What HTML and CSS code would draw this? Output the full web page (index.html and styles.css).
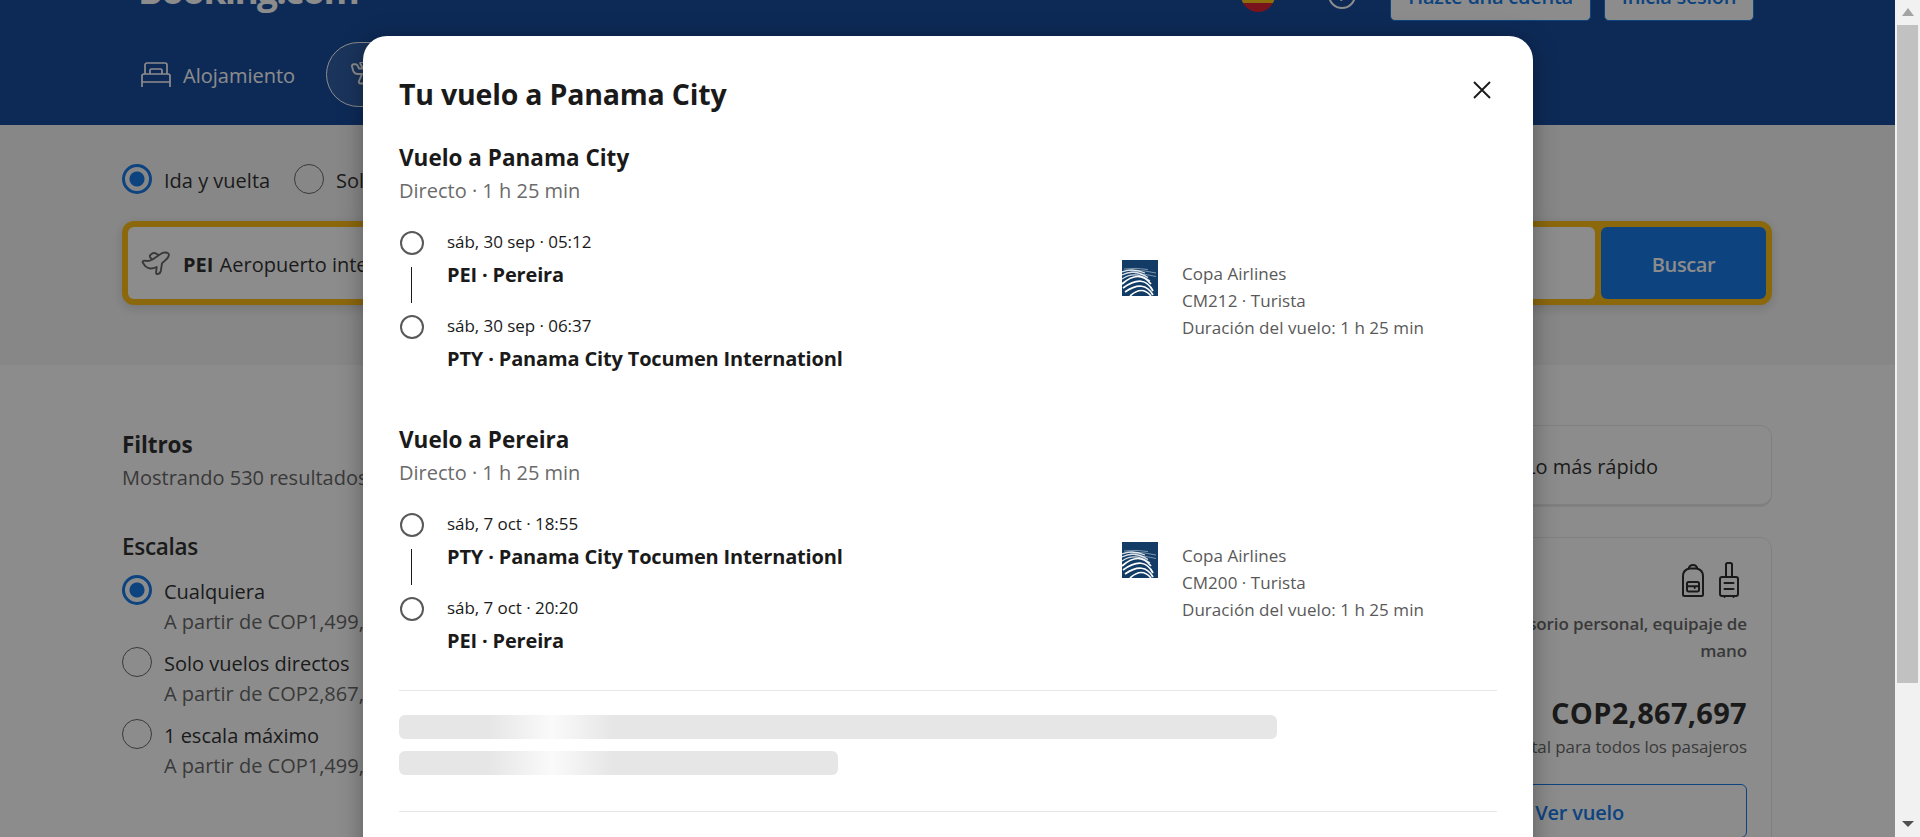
FILE: index.html
```html
<!DOCTYPE html>
<html lang="es">
<head>
<meta charset="utf-8">
<title>Tu vuelo a Panama City</title>
<link rel="stylesheet" href="styles.css">
</head>
<body>
<svg class="defs" aria-hidden="true">
  <symbol id="plane" viewBox="0 0 30 26">
    <path d="M1.800 12.600c-.4-1 .2-2 1.500-2l3.300.4c2 0 3.200-.6 5-1.500l8-5.500c2-1.500 4.300-1.700 6.600-1.200 1.800.5 2 2 1.300 3.600-.6 1.800-1.900 3-3.500 4.200l-3 2.700-1.200 7.700c-.3 1.600-1 2.400-2.500 2.900-1.500.4-2.400 0-2.200-1.500l.6-5.400c-2 1-4.300 1.600-6.600 1.500-2-.1-3.500-1-4.800-2.300zM11.500 9.500 9.600 7.900c-1.100-1-1.100-2.300 0-3.200l1.600-1.200c1-.7 1.900-.7 3-.3l3.400 1.800"/>
  </symbol>
  <symbol id="takeoff" viewBox="0 0 30 26">
    <path d="M1 4.500C.8 3 1.500 2.200 3 2.200h1.500c1 0 1.600.5 2 1.300L8 6.500h4L9.500 2c-.5-1 0-2 1.200-2H13l7 6.500h5c5 0 5 6 0 6h-5L14 20c-.7 1-1.400 1.500-2.500 1.500H9.500C8 21.500 7.600 20.500 8 19l3-7H7c-2.500 0-4-1-4.700-3z"/>
  </symbol>
  <symbol id="copa" viewBox="0 0 36 36">
    <path fill="#123c66" d="M0 0h36v36H0z"/>
    <g fill="none" stroke="#fff">
      <path stroke-width=".7" opacity=".65" d="M2 9q12-1.500 24 .5M8 11q14-1.500 26 2M13 14q10-.5 21 2.500"/>
      <path stroke-width="1.300" opacity=".85" d="M0 12q10-4.500 23 1M0 15q12-6.500 26 2.500M0 19q13-9 28 2"/>
      <path stroke-width="1.700" d="M0 24Q17 9 29 24M1 28Q22 13 31 31M3 32Q22 19 31 35M8 36q12-11 21 0"/>
    </g>
  </symbol>
</svg>

<div class="page">
  <header class="header">
    <div class="topbar">
      <span class="logo">Booking.com</span>
      <span class="flag"></span>
      <span class="help"><span>?</span></span>
      <span class="account create">Hazte una cuenta</span>
      <span class="account login">Inicia sesión</span>
    </div>
    <nav class="nav">
      <svg class="bed" viewBox="0 0 30 26"><path d="M1 25V14a2 2 0 0 1 2-2h24a2 2 0 0 1 2 2V25M1 20h28M4 12V3a2 2 0 0 1 2-2h18a2 2 0 0 1 2 2v9M9 12V8.500A1.500 1.500 0 0 1 10.500 7h9A1.500 1.500 0 0 1 21 8.500V12"/></svg>
      <span class="nav-text">Alojamiento</span>
      <span class="pill"><svg class="plane"><use href="#takeoff"/></svg></span>
    </nav>
  </header>

  <section class="search-band">
    <div class="trip-types">
      <span class="radio on"></span><span class="trip-label first">Ida y vuelta</span>
      <span class="radio"></span><span class="trip-label">Solo ida</span>
    </div>
    <div class="search">
      <div class="field"><svg class="plane"><use href="#plane"/></svg><span class="origin"><b>PEI</b> Aeropuerto internacional</span></div>
      <div class="submit">Buscar</div>
    </div>
  </section>

  <main class="results">
    <aside class="filters">
      <h2 class="heading">Filtros</h2>
      <p class="count">Mostrando 530 resultados</p>
      <h3 class="heading sub">Escalas</h3>
      <div class="option"><span class="radio on"></span><div><p class="name">Cualquiera</p><p class="from">A partir de COP1,499,211</p></div></div>
      <div class="option"><span class="radio"></span><div><p class="name">Solo vuelos directos</p><p class="from">A partir de COP2,867,697</p></div></div>
      <div class="option"><span class="radio"></span><div><p class="name">1 escala máximo</p><p class="from">A partir de COP1,499,211</p></div></div>
    </aside>
    <div class="offers">
      <div class="sort"><span class="sort-text">Lo más rápido</span></div>
      <div class="offer">
        <div class="bags">
          <svg class="backpack" viewBox="0 0 22 36"><path d="M1 32.500V14c0-4 2.500-6.500 6-7.500h8c3.500 1 6 3.500 6 7.500v18.500a1.500 1.500 0 0 1-1.500 1.500h-17A1.500 1.500 0 0 1 1 32.500zM6.500 7C7 4.500 8.500 3 11 3s4 1.500 4.500 4M6.500 20h9a1.500 1.500 0 0 1 1.500 1.500V28a1.500 1.500 0 0 1-1.500 1.500h-9A1.500 1.500 0 0 1 5 28v-6.500A1.500 1.500 0 0 1 6.500 20zM5 24.200h12M12.700 24.500v1.500"/></svg>
          <svg class="suitcase" viewBox="0 0 20 36"><path d="M7 15V2.500A1.500 1.500 0 0 1 8.500 1h3A1.500 1.500 0 0 1 13 2.500V15M3 15h14a2 2 0 0 1 2 2v15a2 2 0 0 1-2 2H3a2 2 0 0 1-2-2V17a2 2 0 0 1 2-2zM5.500 21h9M5.500 27h9M5.500 34v1M14.500 34v1"/></svg>
        </div>
        <p class="included">Accesorio personal, equipaje de<br>mano</p>
        <p class="price">COP2,867,697</p>
        <p class="total">Total para todos los pasajeros</p>
        <div class="see"><span>Ver vuelo</span></div>
      </div>
    </div>
  </main>
</div>

<div class="overlay">
  <div class="modal">
    <div class="modal-head">
      <h1 class="title">Tu vuelo a Panama City</h1>
      <svg class="close" viewBox="0 0 18 18"><path d="M1 1l16 16M17 1L1 17"/></svg>
    </div>
    <section class="flight">
      <h2 class="route">Vuelo a Panama City</h2>
      <p class="duration">Directo · 1 h 25 min</p>
      <div class="leg">
        <div class="track"><i class="dot"></i><i class="line"></i><i class="dot"></i></div>
        <div class="stops">
          <div class="stop"><p class="date">sáb, 30 sep · 05:12</p><p class="airport">PEI · Pereira</p></div>
          <div class="stop"><p class="date">sáb, 30 sep · 06:37</p><p class="airport">PTY · Panama City Tocumen Internationl</p></div>
        </div>
        <svg class="carrier-logo"><use href="#copa"/></svg>
        <div class="carrier"><p>Copa Airlines</p><p>CM212 · Turista</p><p>Duración del vuelo: 1 h 25 min</p></div>
      </div>
    </section>
    <section class="flight">
      <h2 class="route">Vuelo a Pereira</h2>
      <p class="duration">Directo · 1 h 25 min</p>
      <div class="leg">
        <div class="track"><i class="dot"></i><i class="line"></i><i class="dot"></i></div>
        <div class="stops">
          <div class="stop"><p class="date">sáb, 7 oct · 18:55</p><p class="airport">PTY · Panama City Tocumen Internationl</p></div>
          <div class="stop"><p class="date">sáb, 7 oct · 20:20</p><p class="airport">PEI · Pereira</p></div>
        </div>
        <svg class="carrier-logo"><use href="#copa"/></svg>
        <div class="carrier"><p>Copa Airlines</p><p>CM200 · Turista</p><p>Duración del vuelo: 1 h 25 min</p></div>
      </div>
    </section>
    <div class="loading"><div class="bone wide"></div><div class="bone"></div></div>
  </div>
</div>

<div class="scrollbar">
  <i class="arrow up"></i><div class="thumb"></div><i class="arrow down"></i>
</div>
</body>
</html>
```

FILE: styles.css
```css
* { box-sizing: border-box; }
html, body { height: 837px; overflow: hidden; }
body {
  margin: 0;
  background: #fff;
  color: #1a1a1a;
  font: 20px/30px "Open Sans", "Noto Sans", sans-serif;
}
h1, h2, h3, p { margin: 0; }
p, span, h1, h2, h3 { white-space: nowrap; }
svg { display: block; flex: none; }
.defs { position: absolute; width: 0; height: 0; }
.page { width: 1895px; height: 837px; overflow: hidden; }

/* Header */
.header { height: 125px; padding: 0 141px 0 138px; background: #003b95; color: #fff; overflow: hidden; }
.topbar { display: flex; align-items: flex-end; height: 62px; margin-top: -41px; }
.logo { align-self: flex-start; margin-top: 11px; font-size: 37px; line-height: 40px; font-weight: 700; letter-spacing: -1.7px; }
.flag {
  width: 34px; height: 34px; margin: 0 0 9px auto; border-radius: 50%;
  background: linear-gradient(#d80f20 0 25%, #ffc400 25% 74%, #d80f20 74%);
}
.help {
  width: 28px; height: 28px; margin: 0 34px 12px 53px; border: 2px solid #fff; border-radius: 50%;
  font-size: 18px; line-height: 22px; text-align: center;
}
.account {
  height: 62px; background: #fff; color: #006ce4; border: 1px solid #006ce4; border-radius: 5px;
  font-weight: 600; line-height: 73px; text-align: center; letter-spacing: -.3px;
}
.create { width: 201px; }
.login { width: 150px; margin-left: 13px; }
.nav { display: flex; align-items: center; height: 65px; margin-top: 21px; }
.bed { width: 30px; height: 26px; margin: 0 12px 0 3px; fill: none; stroke: #fff; stroke-width: 1.7; }
.nav-text { width: 143px; padding-top: 2px; }
.pill {
  display: flex; align-items: center; width: 170px; height: 65px; padding-left: 24px;
  border: 1px solid #fff; border-radius: 33px; background: rgba(255,255,255,.1);
}
.plane { width: 30px; height: 26px; fill: none; stroke: currentColor; stroke-width: 1.9; stroke-linejoin: round; stroke-linecap: round; }
.pill .plane { overflow: visible; }

/* Search */
.search-band { height: 240px; padding: 39px 123px 0 122px; background: #f5f5f5; }
.radio { flex: none; width: 30px; height: 30px; border: 1px solid #595959; border-radius: 50%; }
.radio.on { border: 3px solid #006ce4; background: radial-gradient(circle, #006ce4 7px, transparent 8px); }
.trip-types { display: flex; align-items: center; height: 30px; }
.trip-label { margin: 3px 0 0 12px; }
.trip-label.first { width: 130px; }
.search {
  display: flex; gap: 6px; height: 84px; margin-top: 27px; padding: 6px;
  border-radius: 12px; background: #ffb700; box-shadow: 0 3px 12px rgba(0,0,0,.16);
}
.field { display: flex; align-items: center; flex: 1; padding-left: 13px; border-radius: 6px; background: #fff; }
.field .plane { color: #595959; margin-right: 12px; }
.origin { padding-top: 3px; }
.origin b { margin-right: 1px; }
.submit { width: 165px; border-radius: 6px; background: #006ce4; color: #fff; font-weight: 600; line-height: 75px; text-align: center; letter-spacing: -.4px; }

/* Results */
.results { display: flex; justify-content: space-between; padding: 60px 123px 0 122px; }
.filters { width: 380px; padding-top: 2px; }
.heading { font-size: 22.5px; line-height: 36px; font-weight: 700; letter-spacing: -.1px; }
.heading.sub { margin: 36px 0 10px; font-weight: 600; letter-spacing: -.3px; }
.count, .from { color: #595959; }
.option { display: flex; gap: 12px; height: 72px; }
.option .name { margin-top: 2px; }
.offers { width: 380px; }
.sort { height: 82px; padding: 0 113px 0 0; border: 1px solid #e7e7e7; border-bottom-width: 3px; border-radius: 12px; line-height: 82px; text-align: right; }
.offer {
  height: 400px; margin-top: 30px; padding: 24px 24px 0; border: 1px solid #e7e7e7; border-radius: 12px; text-align: right;
}
.bags { display: flex; justify-content: flex-end; gap: 15px; height: 36px; padding-right: 8px; fill: none; stroke: #1a1a1a; stroke-width: 2; stroke-linecap: round; }
.bags svg { overflow: visible; }
.backpack { width: 22px; height: 36px; }
.suitcase { width: 20px; height: 36px; }
.included { margin-top: 12px; color: #595959; font-size: 17px; line-height: 27px; font-weight: 600; letter-spacing: -.12px; }
.price { margin-top: 28px; font-size: 29px; line-height: 42px; font-weight: 700; letter-spacing: .3px; }
.total { margin-top: -1px; color: #595959; font-size: 17px; line-height: 27px; letter-spacing: -.08px; }
.see { height: 54px; margin-top: 24px; padding-right: 122px; border: 1px solid #006ce4; border-radius: 6px; color: #006ce4; font-weight: 600; line-height: 55px; letter-spacing: -.2px; }

/* Modal */
.overlay { position: absolute; left: 0; top: 0; width: 1895px; height: 837px; padding: 36px 362px 0 363px; overflow: hidden; background: rgba(26,26,26,.5); }
.modal { height: 900px; padding: 36px; border-radius: 24px; background: #fff; box-shadow: 0 3px 24px rgba(0,0,0,.35); }
.modal-head { display: flex; justify-content: space-between; height: 67px; }
.title { font-size: 28.5px; line-height: 44px; font-weight: 700; letter-spacing: -.2px; }
.close { width: 18px; height: 18px; margin: 9px 6px 0 0; stroke: #1a1a1a; stroke-width: 1.9; }
.flight { height: 234px; margin-bottom: 48px; }
.flight + .flight { margin-bottom: 35px; }
.route { padding-top: 1px; font-size: 22.5px; line-height: 36px; font-weight: 700; }
.duration { color: #6b6b6b; }
.leg { display: flex; margin-top: 22px; }
.track { display: flex; flex-direction: column; align-items: center; gap: 12px; width: 24px; margin: 3px 23px 0 1px; }
.dot { width: 24px; height: 24px; border: 2px solid #595959; border-radius: 50%; }
.line { width: 1px; height: 36px; margin-right: 1px; background: #1a1a1a; }
.stops { width: 675px; }
.stop { height: 84px; }
.date { font-size: 17px; line-height: 27px; letter-spacing: -.05px; }
.airport { margin-top: 5px; font-weight: 700; letter-spacing: -.16px; }
.carrier-logo { width: 36px; height: 36px; margin-top: 32px; }
.carrier { margin: 32px 0 0 24px; color: #595959; font-size: 17px; line-height: 27px; letter-spacing: .05px; }
.loading { display: flex; flex-direction: column; gap: 12px; height: 122px; padding-top: 24px; border: solid #e7e7e7; border-width: 1px 0; }
.bone { width: 439px; height: 24px; border-radius: 6px; background: linear-gradient(90deg, #e6e6e6 90px, #fafafa 153px, #e6e6e6 214px); }
.bone.wide { width: 878px; }

/* Scrollbar */
.scrollbar { position: absolute; right: 0; top: 0; width: 25px; height: 837px; display: flex; flex-direction: column; align-items: center; background: #f1f1f1; }
.arrow { width: 0; height: 0; border: 6px solid transparent; }
.up { margin-top: 8px; border-top-width: 0; border-bottom: 8px solid #a3a3a3; }
.thumb { width: 21px; height: 658px; margin-top: 9px; background: #c1c1c1; }
.down { margin-top: 138px; border-bottom-width: 0; border-top: 6px solid #505050; }
```
